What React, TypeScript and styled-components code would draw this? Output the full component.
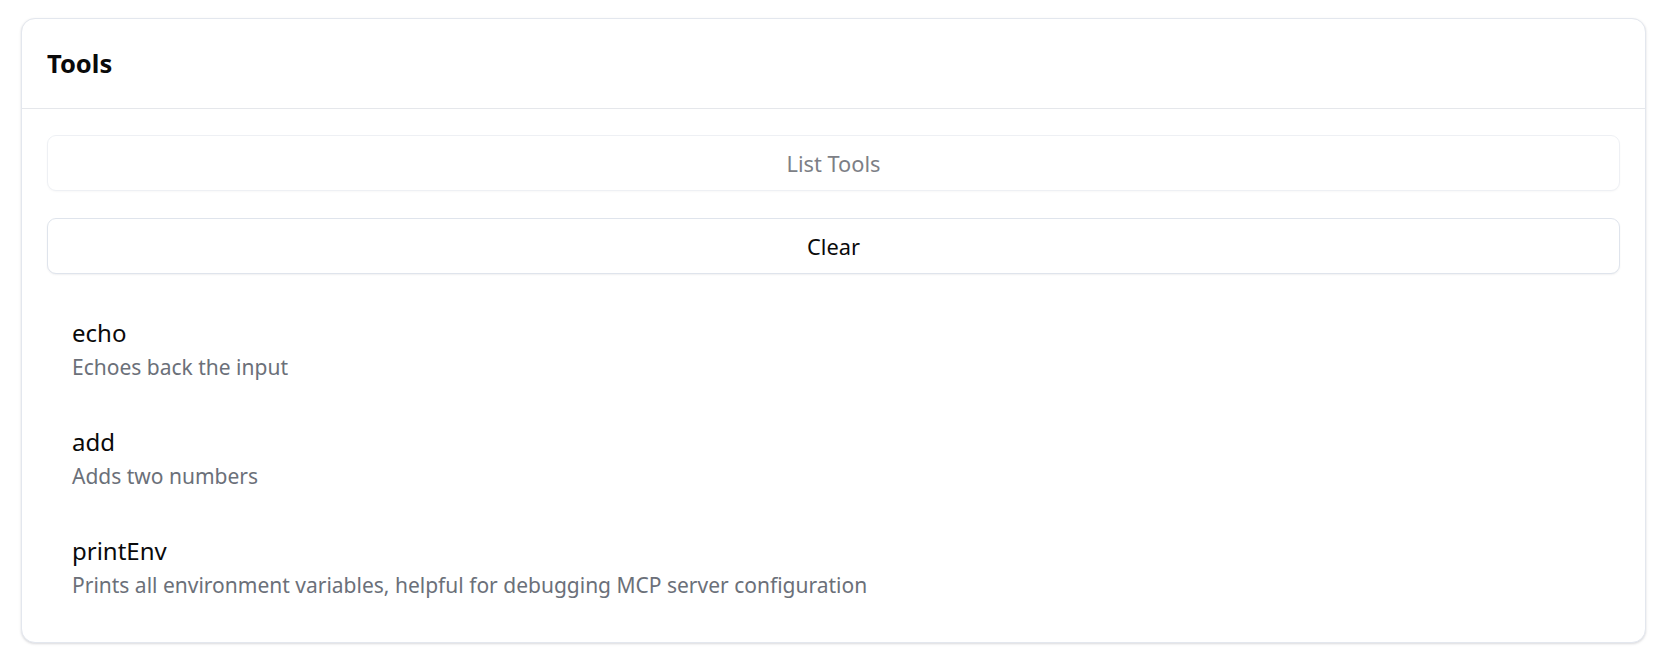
import styled, { createGlobalStyle } from 'styled-components'

const GlobalStyle = createGlobalStyle`
  html, body {
    margin: 0;
    padding: 0;
    background: #ffffff;
  }
  body {
    font-family: "Noto Sans", "Open Sans", "Liberation Sans", sans-serif;
    color: #0a0a0a;
  }
`

const Page = styled.div`
  padding: 18px 11px 27px 21px;
`

const Card = styled.section`
  border: 1px solid #e3e7ee;
  border-radius: 14px;
  background: #ffffff;
  box-shadow: 0 1px 3px rgba(15, 23, 42, 0.1), 0 1px 2px rgba(15, 23, 42, 0.06);
  overflow: hidden;
`

const CardHeader = styled.header`
  height: 89px;
  display: flex;
  align-items: center;
  padding: 0 25px;
  border-bottom: 1px solid #e5e7eb;
`

const Title = styled.h2`
  margin: 0 0 2px 0;
  font-size: 25.5px;
  line-height: 32px;
  font-weight: 700;
  color: #0a0a0a;
`

const CardBody = styled.div`
  display: flex;
  flex-direction: column;
  padding: 26px 25px 25px 25px;
`

const Button = styled.button<{ $disabled?: boolean }>`
  height: 56px;
  width: 100%;
  padding: 1px 0 0 0;
  border: 1px solid ${p => (p.$disabled ? '#eef0f4' : '#dfe4ec')};
  border-radius: 9px;
  background: #ffffff;
  box-shadow: 0 1px 2px rgba(15, 23, 42, ${p => (p.$disabled ? 0.03 : 0.06)});
  font-family: inherit;
  font-size: 21.8px;
  color: ${p => (p.$disabled ? '#7d7f86' : '#0a0a0a')};
  cursor: ${p => (p.$disabled ? 'default' : 'pointer')};
  & + & {
    margin-top: 27px;
  }
`

const ToolList = styled.ul`
  list-style: none;
  margin: 25px 0 0 0;
  padding: 0;
  display: flex;
  flex-direction: column;
  gap: 9px;
`

const ToolItem = styled.li`
  padding: 18px 25px 18px 25px;
  border-radius: 8px;
  display: flex;
  flex-direction: column;
  gap: 5px;
`

const ToolName = styled.span`
  font-size: 24px;
  line-height: 31px;
  color: #0a0a0a;
`

const ToolDescription = styled.span`
  font-size: 21px;
  line-height: 28px;
  color: #6b7079;
`

const tools = [
  { name: 'echo', description: 'Echoes back the input' },
  { name: 'add', description: 'Adds two numbers' },
  { name: 'printEnv', description: 'Prints all environment variables, helpful for debugging MCP server configuration' }
]

const App = () => (
  <>
    <GlobalStyle />
    <Page>
      <Card>
        <CardHeader>
          <Title>Tools</Title>
        </CardHeader>
        <CardBody>
          <Button $disabled disabled>List Tools</Button>
          <Button>Clear</Button>
          <ToolList>
            {tools.map(tool => (
              <ToolItem key={tool.name}>
                <ToolName>{tool.name}</ToolName>
                <ToolDescription>{tool.description}</ToolDescription>
              </ToolItem>
            ))}
          </ToolList>
        </CardBody>
      </Card>
    </Page>
  </>
)

export default App
